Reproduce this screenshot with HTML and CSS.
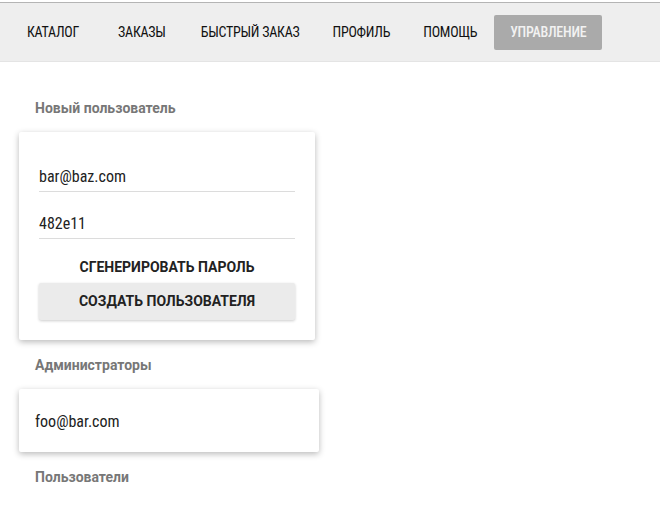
FILE: index.html
```html
<!DOCTYPE html>
<html lang="ru">
<head>
<meta charset="utf-8">
<link rel="stylesheet" href="styles.css">
</head>
<body>
<header class="topbar">
  <nav class="nav">
    <a class="nav-item">КАТАЛОГ</a>
    <a class="nav-item">ЗАКАЗЫ</a>
    <a class="nav-item">БЫСТРЫЙ ЗАКАЗ</a>
    <a class="nav-item">ПРОФИЛЬ</a>
    <a class="nav-item">ПОМОЩЬ</a>
    <a class="nav-item active">УПРАВЛЕНИЕ</a>
  </nav>
</header>
<main class="content">
  <h3 class="section-title">Новый пользователь</h3>
  <div class="card form-card">
    <div class="field"><span class="field-value">bar@baz.com</span></div>
    <div class="field"><span class="field-value">482e11</span></div>
    <div class="flat-btn">СГЕНЕРИРОВАТЬ ПАРОЛЬ</div>
    <div class="raised-btn">СОЗДАТЬ ПОЛЬЗОВАТЕЛЯ</div>
  </div>
  <h3 class="section-title">Администраторы</h3>
  <div class="card list-card">
    <div class="list-item">foo@bar.com</div>
  </div>
  <h3 class="section-title">Пользователи</h3>
</main>
</body>
</html>
```

FILE: styles.css
```css
html, body {
  margin: 0;
  padding: 0;
  background: #fff;
  font-family: Roboto, "Liberation Sans", sans-serif;
  color: #222;
}
.topbar {
  margin-top: 2px;
  border-top: 1px solid #b4b4b4;
  border-bottom: 1px solid #e4e4e4;
  background: #eeeeee;
  height: 58px;
}
.nav {
  display: flex;
  align-items: center;
  height: 100%;
  padding-left: 11px;
  gap: 1px;
}
.nav-item {
  display: block;
  padding: 0 16px;
  line-height: 35px;
  font-size: 14px;
  font-stretch: 75%;
  letter-spacing: -0.25px;
  color: #111;
  border-radius: 2px;
}
.nav-item:nth-child(1) { margin-right: 6px; }
.nav-item:nth-child(2) { margin-right: 2px; }
.nav-item.active {
  background: #aaaaaa;
  color: #f2f2f2;
  font-weight: 500;
}
.content {
  padding: 0 0 0 19px;
  width: 300px;
}
.section-title {
  margin: 0;
  padding: 0 0 0 16px;
  font-size: 14px;
  font-weight: 700;
  color: #777;
  line-height: 16px;
}
.content > .section-title:first-child { padding-top: 38px; margin-bottom: 16px; }
.card {
  background: #fff;
  border-radius: 2px;
  box-shadow: 0 2px 6px rgba(0,0,0,0.28);
}
.form-card {
  width: 256px;
  padding: 28px 20px 20px 20px;
  margin-bottom: 17px;
}
.field {
  height: 31px;
  border-bottom: 1px solid #dcdcdc;
  display: flex;
  align-items: center;
  margin-bottom: 15px;
}
.field-value {
  font-size: 16px;
  font-stretch: 75%;
  color: #222;
  padding-top: 2px;
}
.flat-btn {
  text-align: center;
  font-size: 14px;
  font-weight: 700;
  color: #222;
  line-height: 24px;
  margin-top: 16px;
  margin-bottom: 4px;
}
.raised-btn {
  background: #ebebeb;
  text-align: center;
  font-size: 14px;
  font-weight: 700;
  color: #222;
  line-height: 37px;
  border-radius: 2px;
  box-shadow: 0 1px 3px rgba(0,0,0,0.2);
}
.list-card {
  width: 300px;
  height: 63px;
  display: flex;
  align-items: center;
  margin: 16px 0 17px;
}
.list-item {
  padding-left: 16px;
  padding-top: 2px;
  font-size: 16px;
  font-stretch: 75%;
}
```
